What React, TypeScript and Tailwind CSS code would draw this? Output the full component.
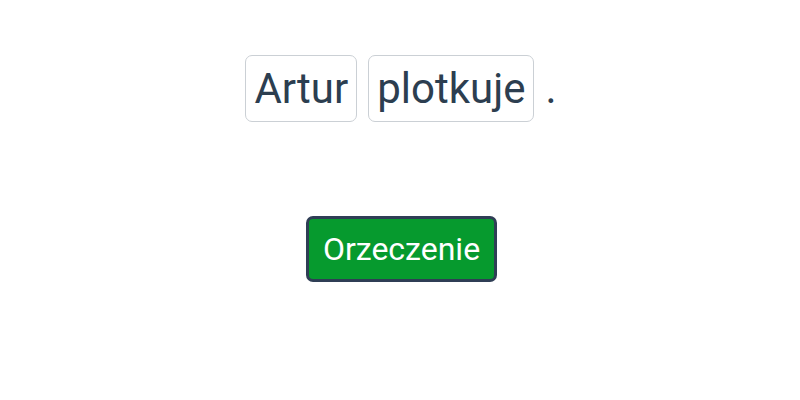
export default function App() {
  const words = ['Artur', 'plotkuje'];

  return (
    <div className="w-[800px] h-[400px] bg-white flex flex-col items-center pt-[55px] font-['Roboto',sans-serif]">
      <div className="flex items-center gap-[11px] pl-[2px] text-[42px] leading-[49px] text-[#2c3e50]">
        {words.map((w) => (
          <span key={w} className="border border-[#cbd0d5] rounded-[7px] px-2 py-2">
            {w}
          </span>
        ))}
        <span>.</span>
      </div>

      <button className="mt-[94px] ml-[3px] bg-[#069a2e] border-[3px] border-[#2f3e55] rounded-[7px] px-[14px] py-[11px] text-[32px] leading-[38px] text-white">
        Orzeczenie
      </button>
    </div>
  );
}
